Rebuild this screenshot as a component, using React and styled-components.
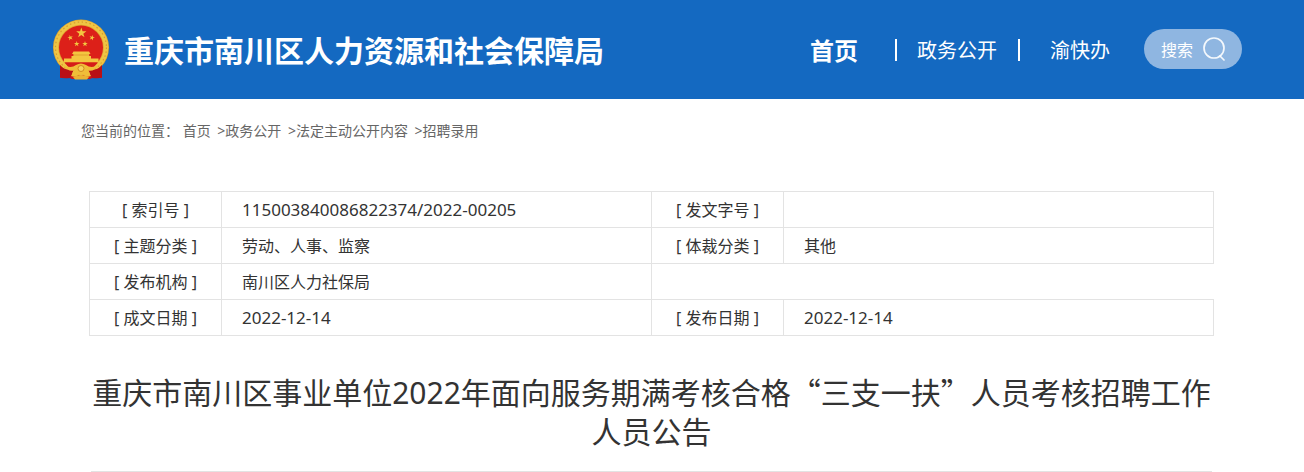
import React from 'react';
import styled, { createGlobalStyle } from 'styled-components';

const GlobalStyle = createGlobalStyle`
    * {
        box-sizing: border-box;
    }
    html, body {
        margin: 0;
        padding: 0;
        background: #ffffff;
        color: #333333;
        font-family: 'Noto Sans', 'Noto Sans CJK SC', sans-serif;
    }
    a {
        color: inherit;
        text-decoration: none;
    }
`;

const HeaderBlock = styled.header`
    background: #1469c1;
    color: #ffffff;
`;

const HeaderInner = styled.div`
    display: flex;
    align-items: center;
    justify-content: space-between;
    max-width: 1200px;
    min-height: 99px;
    margin: 0 auto;
    padding-right: 10px;
`;

const Brand = styled.a`
    display: flex;
    align-items: center;
    gap: 14px;
`;

const BrandName = styled.h1`
    margin: 0;
    padding-top: 2px;
    font-size: 30px;
    line-height: 40px;
    font-weight: 700;
    white-space: nowrap;
`;

const Nav = styled.nav`
    display: flex;
    align-items: center;
`;

const NavLink = styled.a`
    padding: ${(props) => (props.$home ? '2px 37px 0 0' : '2px 21px 0 20px')};
    font-size: ${(props) => (props.$home ? '24px' : '20px')};
    font-weight: ${(props) => (props.$home ? 700 : 400)};
    line-height: 32px;
    white-space: nowrap;

    &:last-of-type {
        padding: 2px 34px 0 30px;
    }
`;

const Divider = styled.span`
    width: 2px;
    height: 22px;
    background: #ffffff;
`;

const SearchButton = styled.button`
    display: flex;
    align-items: center;
    justify-content: center;
    gap: 8px;
    width: 98px;
    height: 40px;
    margin-bottom: 2px;
    padding: 0;
    border: 0;
    border-radius: 20px;
    background: #8fb6e1;
    color: #ffffff;
    font-family: inherit;
    font-size: 16px;
    cursor: pointer;
`;

const Main = styled.main`
    max-width: 1200px;
    margin: 0 auto;
    padding: 20px 38px 0 37px;
`;

const Breadcrumb = styled.nav`
    display: flex;
    margin-left: -8px;
    font-size: 14px;
    line-height: 24px;
    color: #666666;
    white-space: pre;
`;

const Crumb = styled.span`
    margin-right: 3px;
`;

const InfoTable = styled.table`
    width: 100%;
    margin-top: 48px;
    border-collapse: collapse;
    table-layout: fixed;
    font-size: 16px;
    line-height: 24px;
`;

const LabelCol = styled.col`
    width: 132px;
`;

const Label = styled.th`
    height: 36px;
    padding: 0;
    border: 1px solid #e3e3e3;
    font-weight: 400;
    text-align: center;
`;

const Value = styled.td`
    height: 36px;
    padding: 0 20px;
    border: 1px solid #e3e3e3;
    font-size: ${(props) => (props.$numeric ? '17px' : '16px')};
`;

const Title = styled.h2`
    margin: 36px 2px 0;
    padding-bottom: 20px;
    border-bottom: 1px solid #e3e3e3;
    font-size: 30px;
    font-weight: 400;
    line-height: 39px;
    text-align: center;
`;

const Quoted = styled.span`
    font-family: 'Noto Sans CJK SC', sans-serif;
`;

const crumbs = ['首页', '政务公开', '法定主动公开内容', '招聘录用'];

const rows = [
    [['索引号', '115003840086822374/2022-00205'], ['发文字号', '']],
    [['主题分类', '劳动、人事、监察'], ['体裁分类', '其他']],
    [['发布机构', '南川区人力社保局']],
    [['成文日期', '2022-12-14'], ['发布日期', '2022-12-14']],
];

const STAR = '0,-10 2.3,-3.1 9.5,-3.1 3.7,1.2 5.9,8.1 0,3.8 -5.9,8.1 -3.7,1.2 -9.5,-3.1 -2.3,-3.1';

const Emblem = () => (
    <svg width="58" height="62" viewBox="0 0 58 62" aria-hidden="true">
        <path d="M8 43 V59 L15 58 L20 60 H38 L43 58 L50 59 V43Z" fill="#c9151b" />
        <circle cx="29" cy="28.5" r="28" fill="#dfa530" />
        <circle cx="29" cy="28.5" r="25" fill="none" stroke="#efc544" strokeWidth="4.5" />
        <circle cx="29" cy="28.5" r="25.5" fill="none" stroke="#d99c2c" strokeWidth="1.2" strokeDasharray="1.5 2.5" />
        <circle cx="29" cy="28.5" r="22" fill="#dc2019" />
        <g fill="#f3c640">
            <polygon points={STAR} transform="translate(29.3 14) scale(.54)" />
            <polygon points={STAR} transform="translate(18.3 18.7) rotate(-15) scale(.29)" />
            <polygon points={STAR} transform="translate(40 18.7) rotate(15) scale(.29)" />
            <polygon points={STAR} transform="translate(24.7 25) scale(.29)" />
            <polygon points={STAR} transform="translate(33 25) scale(.29)" />
            <path d="M21.5 32.5 H37 L38.5 35 H20Z" />
            <path d="M21.5 35 H37 V37 H39 V39.5 H46.5 V43.5 H12 V39.5 H19.5 V37 H21.5Z" />
        </g>
        <path d="M21 36 H37.5" stroke="#dc9a28" strokeWidth=".8" />
        <path d="M12.5 43.5 H46 L40 50 H18Z" fill="#d51c19" />
        <path d="M8 46 Q15 54 23 48 L18 59 Q10 60 8 58Z M50 46 Q43 54 35 48 L40 59 Q48 60 50 58Z" fill="#b80f16" />
        <path d="M11 46 Q19 50 24 46 Q29 43 34 46 Q39 50 47 46 Q42 53 36 51.5 L39 57 Q33 59 31 55 H27 Q25 59 19 57 L22 51.5 Q16 53 11 46Z" fill="#f0bd38" />
        <circle cx="29" cy="49.5" r="3" fill="#f6d35d" stroke="#d18c20" strokeWidth="1" />
        <path d="M21 58 Q29 54 37 58 L35 60.5 H23Z" fill="#eab332" />
    </svg>
);

const SearchIcon = () => (
    <svg width="24" height="26" viewBox="0 0 24 26" fill="none" stroke="#ffffff" strokeOpacity=".9" strokeWidth="1.7" aria-hidden="true">
        <circle cx="13" cy="12" r="10" />
        <path d="M19 20 L23 24" strokeLinecap="round" />
    </svg>
);

const App = () => {
    return (
        <>
            <GlobalStyle />
            <HeaderBlock>
                <HeaderInner>
                    <Brand href="#">
                        <Emblem />
                        <BrandName>重庆市南川区人力资源和社会保障局</BrandName>
                    </Brand>
                    <Nav>
                        <NavLink href="#" $home>首页</NavLink>
                        <Divider />
                        <NavLink href="#">政务公开</NavLink>
                        <Divider />
                        <NavLink href="#">渝快办</NavLink>
                        <SearchButton type="button">
                            搜索
                            <SearchIcon />
                        </SearchButton>
                    </Nav>
                </HeaderInner>
            </HeaderBlock>
            <Main>
                <Breadcrumb>
                    <span>您当前的位置： </span>
                    {crumbs.map((crumb, index) => (
                        <Crumb key={crumb}>
                            {index > 0 ? ' >' : ''}
                            <a href="#">{crumb}</a>
                        </Crumb>
                    ))}
                </Breadcrumb>
                <InfoTable>
                    <colgroup>
                        <LabelCol />
                        <col />
                        <LabelCol />
                        <col />
                    </colgroup>
                    <tbody>
                        {rows.map((row) => (
                            <tr key={row[0][0]}>
                                {row.map(([label, value]) => (
                                    <React.Fragment key={label}>
                                        <Label scope="row">[ {label} ]</Label>
                                        <Value $numeric={/^\d/.test(value)}>{value}</Value>
                                    </React.Fragment>
                                ))}
                            </tr>
                        ))}
                    </tbody>
                </InfoTable>
                <Title>
                    重庆市南川区事业单位2022年面向服务期满考核合格<Quoted>“三支一扶”</Quoted>人员考核招聘工作人员公告
                </Title>
            </Main>
        </>
    );
};

export default App;
